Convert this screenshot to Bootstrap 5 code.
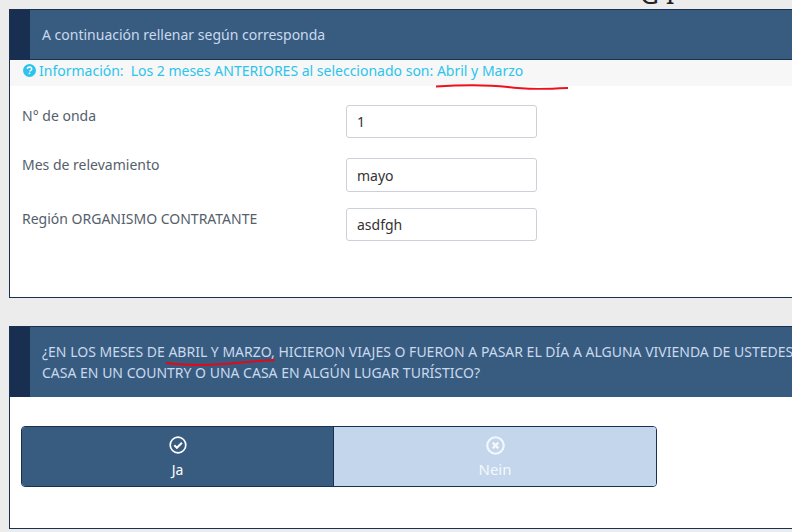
<!DOCTYPE html>
<html lang="es">
<head>
<meta charset="utf-8">
<title>Encuesta</title>
<link href="https://cdn.jsdelivr.net/npm/bootstrap@5.3.0/dist/css/bootstrap.min.css" rel="stylesheet">
<style>
html, body { height: 532px; overflow: hidden; }
body { background: #ececec; font-family: "Noto Sans", "Open Sans", sans-serif; font-size: 14px; color: #54606b; position: relative; }
.page-wrap { width: 1000px; padding-left: 9px; }
.top-strip { height: 9px; overflow: hidden; position: relative; color: #222; }
.top-frag { position: absolute; left: 631px; top: -21px; font-size: 26px; line-height: 30px; font-family: "Noto Sans", sans-serif; }
.panel-box { border: 1px solid #1a3050; background: #fff; }
.panel-one { height: 289px; margin-bottom: 28px; }
.panel-two { height: 203px; }
.panel-head { background: #385c80; border-left: 20px solid #182f52; color: #c9d9ee; padding-left: 12px; display: flex; align-items: center; line-height: 21px; }
.head-one { height: 50px; border-bottom: 1px solid #1a3050; }
.head-two { height: 70px; }
.info-strip { background: #f7f7f7; height: 26px; color: #2cc4ec; padding-left: 13px; padding-bottom: 5px; font-size: 14px; display: flex; align-items: center; }
.info-strip svg { margin-right: 3px; flex: none; }
.gap-text { margin-left: 7px; }
.form-lines { padding-left: 12px; }
.form-line { display: flex; align-items: flex-start; }
.line-1 { margin-top: 19px; }
.line-2 { margin-top: 20px; }
.line-3 { margin-top: 16px; }
.form-name { width: 324px; line-height: 20px; margin-top: 1px; }
.line-2 .form-name { margin-top: -3px; }
.form-line .form-control { width: 191px; height: 33px; font-size: 14px; padding: 6px 10px; color: #333; border-color: #ccd0d8; border-radius: 3px; font-family: inherit; }
.line-2 .form-control { height: 34px; }
.choice-group { margin: 29px 0 0 11px; width: 636px; height: 61px; display: flex; border: 1px solid #1a3050; border-radius: 4px; overflow: hidden; }
.choice-btn { border: 0; border-radius: 0; color: #fff; display: flex; flex-direction: column; align-items: center; justify-content: flex-start; font-size: 14px; line-height: 20px; padding: 9px 0 0; }
.choice-btn svg { margin-bottom: 6px; display: block; }
.choice-yes { width: 311px; background: #385c80; }
.choice-no { flex: 1; background: #c4d6ec; border-left: 1px solid #1a3050; color: #f4f8fd; font-size: 15px; }
.choice-no svg { margin-bottom: 4px; }
.choice-btn:hover, .choice-btn:active { color: #fff; }
.choice-yes:hover { background: #385c80; }
.choice-no:hover { background: #c4d6ec; }
.ink-mark { position: absolute; pointer-events: none; }
</style>
</head>
<body>
<div class="page-wrap">
  <div class="top-strip"><span class="top-frag">G I</span></div>
  <div class="panel-box panel-one">
    <div class="panel-head head-one">A continuación rellenar según corresponda</div>
    <div class="info-strip">
      <svg width="13" height="13" viewBox="0 0 16 16"><circle cx="8" cy="8" r="8" fill="#2cc4ec"/><path d="M5.400 6.200c0-1.500 1.100-2.400 2.700-2.400s2.600.9 2.600 2.200c0 1-.5 1.500-1.300 2-.7.4-.9.7-.9 1.300" fill="none" stroke="#fff" stroke-width="1.800"/><rect x="7" y="10.600" width="1.900" height="1.900" fill="#fff"/></svg>
      <span>Información:</span><span class="gap-text">Los 2 meses ANTERIORES al seleccionado son: Abril y Marzo</span>
    </div>
    <div class="form-lines">
      <div class="form-line line-1"><label class="form-name">N° de onda</label><input class="form-control" value="1"></div>
      <div class="form-line line-2"><label class="form-name">Mes de relevamiento</label><input class="form-control" value="mayo"></div>
      <div class="form-line line-3"><label class="form-name">Región ORGANISMO CONTRATANTE</label><input class="form-control" value="asdfgh"></div>
    </div>
  </div>
  <div class="panel-box panel-two">
    <div class="panel-head head-two"><div>¿EN LOS MESES DE ABRIL Y MARZO, HICIERON VIAJES O FUERON A PASAR EL DÍA A ALGUNA VIVIENDA DE USTEDES,<br>CASA EN UN COUNTRY O UNA CASA EN ALGÚN LUGAR TURÍSTICO?</div></div>
    <div class="choice-group">
      <button type="button" class="btn choice-btn choice-yes">
        <svg width="18" height="18" viewBox="0 0 18 18"><circle cx="9" cy="9" r="7.800" fill="none" stroke="#fff" stroke-width="1.700"/><path d="M5.300 9.300l2.600 2.500 5-5" fill="none" stroke="#fff" stroke-width="2"/></svg>
        <span>Ja</span>
      </button>
      <button type="button" class="btn choice-btn choice-no">
        <svg width="19" height="19" viewBox="0 0 18 18"><circle cx="9" cy="9" r="7.800" fill="none" stroke="#f4f8fd" stroke-width="2"/><path d="M6.300 6.300l5.400 5.400M11.700 6.300l-5.400 5.400" fill="none" stroke="#f4f8fd" stroke-width="2.200"/></svg>
        <span>Nein</span>
      </button>
    </div>
  </div>
</div>
<svg class="ink-mark" style="left:430px;top:80px" width="145" height="14" viewBox="0 0 145 14"><path d="M6 6.500C30 5 60 5 78 7c15 2.500 30 2.500 60 1" fill="none" stroke="#f0101c" stroke-width="1.800"/></svg>
<svg class="ink-mark" style="left:160px;top:355px" width="122" height="14" viewBox="0 0 122 14"><path d="M6 8c12 1.500 20 2 35 2 25 0 50-4 74-5" fill="none" stroke="#e00a18" stroke-width="2"/></svg>
<script src="https://cdn.jsdelivr.net/npm/bootstrap@5.3.0/dist/js/bootstrap.bundle.min.js"></script>
</body>
</html>
